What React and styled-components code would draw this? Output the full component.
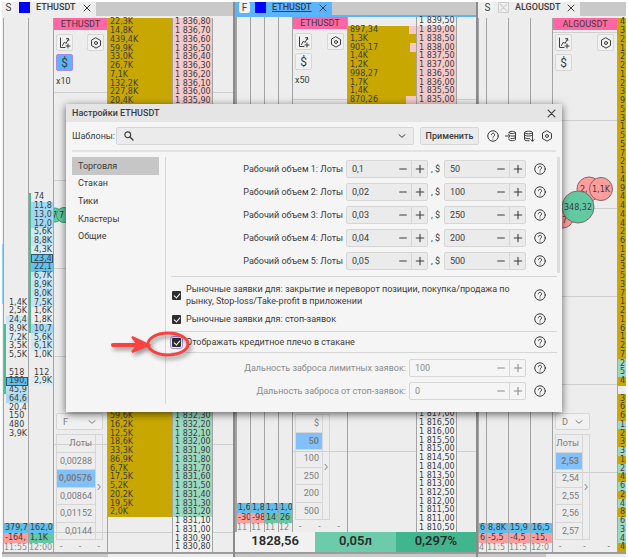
import React, { useState } from "react";
import styled, { createGlobalStyle, css } from "styled-components";

const colors = {
	page: "#ededed",
	strip: "#c9c9c9",
	line: "#a3a3a3",
	soft: "#d6d6d6",
	text: "#3c3c3c",
	muted: "#8c8c8c",
	gold: "#c8a800",
	ask: "#f5c9c9",
	bid: "#9dd9c1",
	blue: "#5cb4ff",
	cell: "#5cc0f0",
	red: "#ff9c9c",
	green: "#63c9a3",
	pink: "#ff66a3",
};

/* ---------- data ---------- */

// rows between the two visible blocks carry no quote
const price = (from, step, top, bottom) => (i) => {
	if (i > top && i < bottom) return "";
	const [whole, cents] = (from - step * i).toFixed(2).split(".");
	return `1 ${whole.slice(1)},${cents}`;
};

const place = (start, values) => Object.fromEntries(values.map((v, i) => [start + i, v]));

const spotVolumes = {
	...place(0, ["22,3K", "14,8K", "439,4K", "59,9K", "33,0K", "26,7K", "7,1K", "132,2K", "227,8K", "20,4K"]),
	...place(45, ["59,6K", "16,2K", "12,5K", "18,6K", "33,3K", "86,9K", "6,7K", "17,5K", "5,2K", "20,2K", "19,5K", "2,0K"]),
};

const futuresVolumes = place(1, ["897,34", "1,3K", "905,17", "1,4K", "1,2K", "998,27", "1,7K", "1,4K", "870,26"]);
const futuresNotches = { 1: 7, 3: 6, 9: 10 };

const algoDepth = "432122123953155721494444261535371216127254366123312462486344".split("");
// the spread is one empty row
const algoRows = [...algoDepth.slice(0, 42), "", ...algoDepth.slice(42)];
const algoBids = [39, 40, 46, 49, 51, 53, 55, 57, 58, 59];

const clusterA = {
	...place(32, ["1,4K", "2,5K", "24,4", "8,9K", "7,2K", "3,5K", "5,5K"]),
	...place(40, ["518", "190,", "45,9", "64,6", "20,4", "150", "480", "3,9K"]),
};
const clusterB = {
	...place(20, ["74", "11,8", "13,0", "12,0", "5,6K", "8,8K", "4,3K", "23,4", "22,1", "6,7K", "8,9K"]),
	...place(31, ["8,0K", "7,5K", "1,6K", "1,8K", "10,7", "5,6K", "6,1K", "1,0K"]),
	...place(40, ["112", "2,9K"]),
};
const shadesA = { 34: "#c9e6f3", 35: "#dcedf4", 36: "#dcedf4", 41: colors.cell, 42: "#b9e0f2", 43: "#a9daf2" };
const shadesB = {
	21: "#9fd8f5", 22: "#9fd8f5", 23: "#9fd8f5", 24: "#cfe9f4", 25: "#c2e4f4", 26: "#d9edf4",
	27: colors.cell, 28: "#62c3f0", 29: "#c9e6f3", 30: "#c2e4f4", 31: "#c2e4f4", 32: "#c2e4f4",
	35: "#9fd8f5", 36: "#cfe9f4", 37: "#cfe9f4", 41: "#d9edf4",
};

const lots = [
	["0,1", "50"],
	["0,02", "100"],
	["0,03", "250"],
	["0,04", "200"],
	["0,05", "500"],
];

/* ---------- icons ---------- */

const Svg = ({ size = 12, children }) => (
	<svg width={size} height={size} viewBox="0 0 24 24" fill="none" stroke="currentColor" strokeWidth="2" strokeLinecap="round" strokeLinejoin="round" aria-hidden="true">
		{children}
	</svg>
);

const HelpIcon = () => (
	<Svg>
		<circle cx="12" cy="12" r="10.5" />
		<path d="M8.8 9.5a3.2 3.2 0 1 1 4.8 2.8c-1 .6-1.6 1.1-1.6 2.2" />
		<path d="M12 18v.2" />
	</Svg>
);

const NutIcon = ({ size = 12 }) => (
	<Svg size={size}>
		<path d="M12 1.8 21 6.9v10.2l-9 5.1-9-5.1V6.9z" />
		<circle cx="12" cy="12" r="3" />
	</Svg>
);

const ImportIcon = () => (
	<Svg>
		<path d="M8 6V5c0-3 13-3 13 0v14c0 3-13 3-13 0v-1" />
		<path d="M8 5c0 3 13 3 13 0M13 12h8M12 17c4 .3 9-.2 9-2M1 12h9M7 8.500 10.500 12 7 15.500" />
	</Svg>
);

const ExportIcon = () => (
	<Svg>
		<path d="M3 5c0-3.500 16-3.500 16 0s-16 3.500-16 0v14c0 2 5 2.700 9 2.500M19 5v8M3 10c0 3 16 3 16 0M3 15c0 2 6 2.800 10 2.400" />
		<path d="M19 15v7M16 19.500l3 3 3-3" />
	</Svg>
);

const ChartIcon = () => (
	<Svg size={12}>
		<path d="M3 2v19h9M7 17l4-7 3 3 5-9M15 3.500l4-.5.500 4M18 14v8M14 18h8" />
	</Svg>
);

const CloseIcon = ({ size = 8 }) => (
	<Svg size={size}>
		<path d="M3 3l18 18M21 3 3 21" strokeWidth="3" />
	</Svg>
);

const ChevronDown = ({ size = 8 }) => (
	<Svg size={size}>
		<path d="m3 8 9 8 9-8" strokeWidth="3" />
	</Svg>
);

const ChevronRight = () => (
	<Svg size={8}>
		<path d="m9 4 7 8-7 8" strokeWidth="3" />
	</Svg>
);

const SearchIcon = () => (
	<Svg size={10}>
		<circle cx="9" cy="9" r="7" strokeWidth="2.6" />
		<path d="m14.500 14.500 7 7" strokeWidth="3.4" />
	</Svg>
);

const MinusIcon = () => (
	<Svg size={10}>
		<path d="M4 12h16" strokeWidth="2.6" />
	</Svg>
);

const PlusIcon = () => (
	<Svg size={10}>
		<path d="M3 12h18M12 3v18" strokeWidth="2.6" />
	</Svg>
);

/* ---------- workspace parts ---------- */

const Cluster = ({ values = {}, shades = {}, selected, bar, foot, tone }) => (
	<ClusterColumn>
		<ClusterRows>
			{bar && <ClusterBar $from={bar[0]} $to={bar[1]} />}
			{Object.entries(values).map(([row, value]) => (
				<ClusterCell key={row} $row={Number(row) + 1} $shade={shades[row]} $selected={Number(row) === selected}>
					{value}
				</ClusterCell>
			))}
		</ClusterRows>
		{foot && (
			<ClusterFoot>
				<FootCell $fill={colors.cell}>{foot[0]}</FootCell>
				<FootCell $fill={tone === "up" ? colors.green : colors.red}>{foot[1]}</FootCell>
				<FootTime>{foot[2]}</FootTime>
			</ClusterFoot>
		)}
	</ClusterColumn>
);

const Ticks = ({ name, dollar, leverage, offset, market, header, sizes, active, wide, children }) => (
	<TickArea $offset={offset}>
		<TickHeader>{name}</TickHeader>
		<TickTools>
			<ToolButton aria-label="График"><ChartIcon /></ToolButton>
			<ToolButton aria-label="Настройки"><NutIcon /></ToolButton>
			<ToolButton $active={dollar} aria-label="Валюта">$</ToolButton>
		</TickTools>
		{leverage && <Leverage>{leverage}</Leverage>}
		{children}
		<TickBottom>
			{market && (
				<MarketBox $wide={wide}>
					<MarketSelect aria-label="Тип" defaultValue={market}>
						<option>{market}</option>
					</MarketSelect>
					<ChevronDown />
				</MarketBox>
			)}
			<SizeBox $wide={wide}>
				<SizeList>
					<SizeHeader>{header}</SizeHeader>
					{sizes.map((size) => (
						<SizeButton key={size} $active={size === active}>{size}</SizeButton>
					))}
				</SizeList>
				<Expand aria-label="Развернуть"><ChevronRight /></Expand>
			</SizeBox>
			<Dashes><span>-</span><span>-</span><span>-</span></Dashes>
		</TickBottom>
	</TickArea>
);

const Ladder = ({ count, volumes, notches = {}, tint, goldRows, label, offset }) => {
	const rows = Array.from({ length: count }, (_, i) => i);
	return (
		<>
			<LadderColumn $offset={offset}>
				{rows.map((i) => (
					<VolumeCell key={i} $gold={goldRows(i)} $notch={notches[i]}>{volumes[i]}</VolumeCell>
				))}
			</LadderColumn>
			<LadderColumn>
				{rows.map((i) => (
					<PriceCell key={i} $tint={tint(i)}>{label(i)}</PriceCell>
				))}
			</LadderColumn>
		</>
	);
};

const PanelTab = ({ badge, name, active, first, empty }) => (
	<TabStrip $active={active}>
		<Tab $active={active} $first={first}>
			<Badge>{badge}</Badge>
			<Swatch $empty={empty}>{empty && <CloseIcon size={9} />}</Swatch>
			<TabName $active={active}>{name}</TabName>
			<TabClose aria-label="Закрыть"><CloseIcon /></TabClose>
		</Tab>
	</TabStrip>
);

/* ---------- dialog parts ---------- */

const Stepper = ({ label, value, wide, disabled }) => {
	const [current, setCurrent] = useState(value);
	return (
		<StepperBox $wide={wide} $disabled={disabled}>
			<StepperInput aria-label={label} value={current} disabled={disabled} onChange={(e) => setCurrent(e.target.value)} />
			<StepButton aria-label="Меньше" disabled={disabled}><MinusIcon /></StepButton>
			<StepButton aria-label="Больше" disabled={disabled} $divided><PlusIcon /></StepButton>
		</StepperBox>
	);
};

const Help = () => (
	<HelpButton aria-label="Справка"><HelpIcon /></HelpButton>
);

const Check = ({ id, focused, children }) => (
	<CheckRow>
		<Checkbox type="checkbox" id={id} defaultChecked $focused={focused} />
		<CheckLabel htmlFor={id}>{children}</CheckLabel>
		<Help />
	</CheckRow>
);

const SettingsDialog = () => {
	const [section, setSection] = useState("Торговля");
	return (
		<Dialog role="dialog" aria-label="Настройки ETHUSDT">
			<DialogTitle>
				<span>Настройки ETHUSDT</span>
				<IconButton aria-label="Закрыть"><CloseIcon size={9} /></IconButton>
			</DialogTitle>
			<Templates>
				<label htmlFor="template">Шаблоны:</label>
				<Combo>
					<SearchIcon />
					<ComboInput id="template" />
					<ChevronDown />
				</Combo>
				<ApplyButton>Применить</ApplyButton>
				<IconRow>
					<IconButton aria-label="Справка"><HelpIcon /></IconButton>
					<IconButton aria-label="Импорт"><ImportIcon /></IconButton>
					<IconButton aria-label="Экспорт"><ExportIcon /></IconButton>
					<IconButton aria-label="Параметры"><NutIcon /></IconButton>
				</IconRow>
			</Templates>
			<DialogBody>
				<Sections>
					{["Торговля", "Стакан", "Тики", "Кластеры", "Общие"].map((item) => (
						<SectionButton key={item} $active={item === section} onClick={() => setSection(item)}>{item}</SectionButton>
					))}
				</Sections>
				<Content>
					<LotRows>
						{lots.map(([lot, usd], i) => (
							<FormRow key={lot}>
								<span>Рабочий объем {i + 1}: Лоты</span>
								<Stepper label={`Лоты ${i + 1}`} value={lot} />
								<Unit>, $</Unit>
								<Stepper label={`$ ${i + 1}`} value={usd} />
								<Help />
							</FormRow>
						))}
					</LotRows>
					<CheckGroup>
						<Check id="market-close">
							Рыночные заявки для: закрытие и переворот позиции, покупка/продажа по<br />
							рынку, Stop-loss/Take-profit в приложении
						</Check>
						<Check id="market-stop">Рыночные заявки для: стоп-заявок</Check>
					</CheckGroup>
					<CheckGroup $single>
						<Check id="leverage" focused>Отображать кредитное плечо в стакане</Check>
					</CheckGroup>
					<LimitRows>
						<FormRow $disabled>
							<span>Дальность заброса лимитных заявок:</span>
							<Stepper label="Лимитные заявки" value="100" wide disabled />
							<Help />
						</FormRow>
						<FormRow $disabled>
							<span>Дальность заброса от стоп-заявок:</span>
							<Stepper label="Стоп-заявки" value="0" wide disabled />
							<Help />
						</FormRow>
					</LimitRows>
				</Content>
				<ScrollThumb />
			</DialogBody>
			<Marker viewBox="0 0 84 32" aria-hidden="true">
				<ellipse cx="60" cy="15" rx="20" ry="11" />
				<path d="M5 16h34" strokeWidth="4" />
				<path d="M24 8l17 8-17 7 6-7z" fill="#f9423f" strokeWidth="2" />
			</Marker>
		</Dialog>
	);
};

const App = () => (
	<>
		<GlobalStyle />
		<Workspace>
			<Panel>
				<PanelTab badge="S" name="ETHUSDT" first />
				<PanelBody $columns="1px 25px 25px 54px 65px 40px 1fr" $inset>
					<Sliver />
					<Cluster values={clusterA} shades={shadesA} selected={41} bar={[36, 44]} foot={["379,7", "-164,", "11:55"]} />
					<Cluster values={clusterB} shades={shadesB} selected={27} bar={[21, 37]} foot={["162,0", "1,1K", "12:00"]} tone="up" />
					<Ticks name="ETHUSDT" dollar wide leverage="x10" offset={74} market="F" header="Лоты" sizes={["0,00288", "0,00576", "0,00864", "0,01152", "0,0144"]} active="0,00576">
						<SideBubbles viewBox="0 0 13 18">
							<circle cx="1" cy="9" r="7" />
							<circle cx="10" cy="9" r="7.500" />
							<text x="-2" y="12">7</text>
							<text x="5" y="12">7</text>
						</SideBubbles>
					</Ticks>
					<Ladder
						count={61}
						volumes={spotVolumes}
						offset={74}
						goldRows={(i) => i < 57}
						tint={(i) => (i < 25 ? colors.ask : i < 57 ? colors.bid : null)}
						label={price(1836.8, 0.1, 9, 45)}
					/>
					<Spare $offset={74} />
				</PanelBody>
				<PanelFoot $thumb />
			</Panel>

			<Panel $divided>
				<PanelTab badge="F" name="ETHUSDT" active />
				<PanelBody $columns="1px 14px 14px 14px 14px 55px 69px 40px 1fr">
					<Cluster />
					<Cluster foot={["1,6", "-30", "11"]} />
					<Cluster foot={["1,8", "-98", "11"]} />
					<Cluster foot={["1,1", "14", "11"]} tone="up" />
					<Cluster foot={["1,0", "26", "12"]} tone="up" />
					<Ticks name="ETHUSDT" leverage="x50" offset={82} header="$" sizes={["50", "100", "250", "200", "500"]} active="50" />
					<Ladder
						count={59}
						volumes={futuresVolumes}
						notches={futuresNotches}
						offset={82}
						goldRows={(i) => i > 0 && i < 25}
						tint={(i) => (i > 0 && i < 25 ? colors.ask : null)}
						label={price(1839.5, 0.5, 9, 45)}
					/>
					<Spare $offset={82} />
				</PanelBody>
				<Totals>
					<Total>1828,56</Total>
					<Total $fill="#6ccbaa">0,05л</Total>
					<Total $fill="#41b68e">0,297%</Total>
				</Totals>
				<PanelFoot />
			</Panel>

			<Panel $divided>
				<PanelTab badge="S" name="ALGOUSDT" empty />
				<PanelBody $columns="8px 22px 22px 22px 1fr 9px" $inset>
					<Cluster foot={["6", "6", "4"]} />
					<Cluster foot={["8,8K", "-5,5", "11:5"]} />
					<Cluster foot={["15,9", "-4,5", "11:5"]} />
					<Cluster foot={["16,5", "-15,", "12:0"]} />
					<Ticks name="ALGOUSDT" offset={14} market="D" header="Лоты" sizes={["2,53", "2,54", "2,55", "2,56", "2,57"]} active="2,53">
						<Bubbles viewBox="0 0 62 56">
							<circle className="sell" cx="10" cy="42" r="10" />
							<text x="9" y="47">7</text>
							<circle className="sell" cx="36" cy="13" r="12" />
							<text x="27" y="16">2,</text>
							<circle className="buy" cx="25" cy="31" r="16" />
							<text x="11" y="34">348,32</text>
							<circle className="sell" cx="48" cy="13" r="11.500" />
							<text x="39" y="16">1,1K</text>
						</Bubbles>
					</Ticks>
					<LadderColumn>
						{algoRows.map((digit, i) => (
							<VolumeCell key={i} $gold={digit !== ""} $bid={algoBids.includes(i)}>{digit}</VolumeCell>
						))}
					</LadderColumn>
				</PanelBody>
				<PanelFoot $thumb />
			</Panel>
		</Workspace>
		<SettingsDialog />
	</>
);

/* ---------- styles ---------- */

const GlobalStyle = createGlobalStyle`
	* {
		box-sizing: border-box;
	}
	body {
		margin: 0;
		padding: 2px;
		background: #fff;
		color: ${colors.text};
		font-family: Roboto, "Noto Sans", sans-serif;
		font-size: 9px;
		line-height: 12px;
	}
	button, input, select {
		margin: 0;
		padding: 0;
		border: 0;
		background: none;
		color: inherit;
		font: inherit;
	}
	svg {
		display: block;
		flex: none;
	}
`;

const gridLines = css`
	background: linear-gradient(#cfcfcf 1px, transparent 1px) 0 ${(p) => p.$offset}px / 100% 88px;
`;

const Workspace = styled.main`
	display: grid;
	grid-template-columns: 231fr 243fr 150fr;
	height: calc(100vh - 4px);
	background: ${colors.page};
`;

const Panel = styled.section`
	display: flex;
	flex-direction: column;
	min-width: 0;
	min-height: 0;
	border-left: ${(p) => (p.$divided ? "2px solid #8b8b8b" : "0")};
`;

const TabStrip = styled.div`
	display: flex;
	flex: none;
	height: 15px;
	background: ${colors.strip};
	border-bottom: ${(p) => (p.$active ? `2px solid ${colors.blue}` : `1px solid ${colors.page}`)};
`;

const Tab = styled.div`
	display: flex;
	align-items: flex-start;
	padding: 0 5px 0 ${(p) => (p.$first ? 1 : 4)}px;
	background: ${(p) => (p.$active ? colors.blue : colors.page)};
`;

const Badge = styled.span`
	width: 11px;
	height: 11px;
	margin-right: 5px;
	border-radius: 2px;
	background: #f2f2f2;
	font-size: 10px;
	line-height: 11px;
	text-align: center;
`;

const Swatch = styled.span`
	width: 11px;
	height: 11px;
	margin-right: 6px;
	overflow: hidden;
	background: ${(p) => (p.$empty ? "#efefef" : "#0000ff")};
	border: ${(p) => (p.$empty ? "1px solid #cfcfcf" : "0")};
	color: #cfcfcf;
`;

const TabName = styled.span`
	font-weight: 500;
	line-height: 11px;
	text-decoration: ${(p) => (p.$active ? "underline" : "none")};
`;

const TabClose = styled.button`
	height: 11px;
	margin-left: 7px;
`;

const PanelBody = styled.div`
	display: grid;
	flex: 1;
	grid-template-columns: ${(p) => p.$columns};
	min-height: 0;
	padding-top: ${(p) => (p.$inset ? 1 : 0)}px;
`;

const PanelFoot = styled.div`
	flex: none;
	height: 5px;
	border-top: 2px solid #9c9c9c;
	background: linear-gradient(90deg, ${colors.strip} 46%, ${(p) => (p.$thumb ? "#ececec" : colors.strip)} 46%);
`;

const Sliver = styled.div`
	height: 60px;
	margin-top: 226px;
	background: #8fd0f2;
`;

const ClusterColumn = styled.div`
	display: grid;
	grid-template-columns: minmax(0, 1fr);
	grid-template-rows: minmax(0, 1fr);
	min-width: 0;
	overflow: hidden;
	border-left: 1px solid ${colors.line};
	font-family: "DejaVu Sans", sans-serif;
	font-size: 8px;
	white-space: nowrap;
`;

const ClusterRows = styled.div`
	display: grid;
	grid-area: 1 / 1;
	grid-template-columns: 2px minmax(0, 1fr);
	grid-template-rows: repeat(61, minmax(0, 1fr));
`;

const ClusterBar = styled.div`
	grid-column: 1;
	grid-row: ${(p) => p.$from} / ${(p) => p.$to};
	background: #4dbb93;
`;

const ClusterCell = styled.div`
	display: flex;
	grid-column: 2;
	grid-row: ${(p) => p.$row};
	align-items: center;
	padding-left: 3px;
	background: ${(p) => p.$shade || "transparent"};
	outline: ${(p) => (p.$selected ? "1px solid #35566b" : "0")};
	outline-offset: -1px;
	line-height: 8px;
`;

const ClusterFoot = styled.div`
	grid-area: 1 / 1;
	align-self: end;
	background: ${colors.page};
`;

const FootCell = styled.div`
	height: 10px;
	padding-left: 1px;
	background: ${(p) => p.$fill};
	line-height: 10px;
`;

const FootTime = styled.div`
	height: 9px;
	color: ${colors.muted};
	line-height: 9px;
`;

const TickArea = styled.div`
	position: relative;
	display: flex;
	flex-direction: column;
	min-width: 0;
	padding: 0 3px 0 2px;
	border-left: 1px solid ${colors.line};
	${gridLines}
`;

const TickHeader = styled.div`
	height: 12px;
	margin: 0 -3px 4px -2px;
	background: ${colors.pink};
	line-height: 12px;
	text-align: center;
`;

const TickTools = styled.div`
	display: grid;
	grid-template-columns: 17px 17px;
	justify-content: space-between;
	row-gap: 3px;
`;

const ToolButton = styled.button`
	display: flex;
	align-items: center;
	justify-content: center;
	height: 17px;
	border: 1px solid ${(p) => (p.$active ? "#a98be8" : colors.soft)};
	border-radius: 2px;
	background: ${(p) => (p.$active ? colors.blue : "#f1f1f1")};
	font-size: 12px;
`;

const Leverage = styled.div`
	margin-top: 4px;
`;

const TickBottom = styled.div`
	margin-top: auto;
	color: #7c7c7c;
`;

const MarketBox = styled.div`
	display: flex;
	align-items: center;
	width: ${(p) => (p.$wide ? 47 : 35)}px;
	height: 17px;
	margin-bottom: 4px;
	padding: 0 6px;
	border: 1px solid ${colors.soft};
	border-radius: 2px;
	background: #f1f1f1;
`;

const MarketSelect = styled.select`
	flex: 1;
	min-width: 0;
	appearance: none;
`;

const SizeBox = styled.div`
	display: flex;
	width: ${(p) => (p.$wide ? 47 : 35)}px;
	height: 106px;
	border: 1px solid ${colors.soft};
`;

const SizeList = styled.div`
	display: flex;
	flex: 1;
	flex-direction: column;
	border-right: 1px solid ${colors.soft};
`;

const sizeCell = css`
	display: flex;
	flex: 1;
	align-items: center;
	justify-content: flex-end;
	padding-right: 3px;
	border-bottom: 1px solid ${colors.soft};
`;

const SizeHeader = styled.div`
	${sizeCell}
`;

const SizeButton = styled.button`
	${sizeCell}
	background: ${(p) => (p.$active ? "#82c0fb" : "transparent")};
	font-weight: ${(p) => (p.$active ? 700 : 400)};

	&:last-child {
		border-bottom: 0;
	}
`;

const Expand = styled.button`
	display: flex;
	align-items: center;
	justify-content: center;
	width: 6px;
`;

const Dashes = styled.div`
	display: flex;
	justify-content: space-between;
	height: 12px;
	padding: 0 4px;
`;

const bubbleText = css`
	text {
		fill: ${colors.text};
		stroke: none;
		font-family: "DejaVu Sans", sans-serif;
		font-size: 8px;
	}
`;

const Bubbles = styled.svg`
	position: absolute;
	top: 158px;
	left: 0;
	width: 62px;
	height: 56px;
	stroke: #7d6a6a;
	stroke-width: 1;
	${bubbleText}

	.sell {
		fill: ${colors.red};
	}
	.buy {
		fill: ${colors.green};
	}
`;

const SideBubbles = styled.svg`
	position: absolute;
	top: 188px;
	left: 0;
	width: 13px;
	height: 18px;
	fill: ${colors.green};
	stroke: #3f9a7a;
	${bubbleText}
`;

const LadderColumn = styled.div`
	display: flex;
	flex-direction: column;
	min-width: 0;
	border-left: 1px solid ${colors.line};
	font-family: "DejaVu Sans", sans-serif;
	font-size: 8px;
	white-space: nowrap;
	${(p) => p.$offset && gridLines}
`;

const ladderCell = css`
	display: flex;
	flex: 1;
	align-items: center;
	min-height: 0;
	padding-left: 2px;
	line-height: 8px;
`;

const VolumeCell = styled.div`
	${ladderCell}
	background: ${(p) => (p.$bid ? colors.bid : p.$gold ? colors.gold : "transparent")};
	border-right: ${(p) => (p.$notch ? `${p.$notch}px solid ${colors.ask}` : "0")};
`;

const PriceCell = styled.div`
	${ladderCell}
	background: ${(p) => p.$tint || "#f1f1f1"};
`;

const Spare = styled.div`
	border-left: 1px solid ${colors.line};
	${gridLines}
`;

const Totals = styled.div`
	display: grid;
	flex: none;
	grid-template-columns: repeat(3, 1fr);
	height: 20px;
	font-size: 13px;
	font-weight: 600;
`;

const Total = styled.div`
	background: ${(p) => p.$fill || "#f1f1f1"};
	color: #2b2b2b;
	line-height: 18px;
	text-align: center;
`;

const Dialog = styled.form.attrs({ onSubmit: (e) => e.preventDefault() })`
	position: absolute;
	top: 104px;
	right: 66px;
	left: 66px;
	padding-bottom: 8px;
	background: #f5f5f5;
	box-shadow: 0 2px 8px rgba(0, 0, 0, 0.6);
`;

const DialogTitle = styled.div`
	display: flex;
	align-items: center;
	justify-content: space-between;
	height: 18px;
	padding: 0 6px;
	background: #e5e5e5;
	font-weight: 500;
`;

const IconButton = styled.button`
	display: flex;
`;

const Templates = styled.div`
	display: flex;
	align-items: center;
	gap: 6px;
	margin: 0 6px;
	padding: 5px 0;
	border-bottom: 2px solid #e2e2e2;

	label {
		width: 38px;
		white-space: nowrap;
	}
`;

const Combo = styled.div`
	display: flex;
	flex: 1;
	align-items: center;
	height: 18px;
	padding: 0 7px;
	border: 1px solid ${colors.soft};
	border-radius: 2px;
	background: #ebebeb;
`;

const ComboInput = styled.input`
	flex: 1;
	min-width: 0;
`;

const ApplyButton = styled.button`
	width: 59px;
	height: 18px;
	border: 1px solid ${colors.soft};
	border-radius: 2px;
	background: #ebebeb;
	font-weight: 500;
`;

const IconRow = styled.div`
	display: flex;
	gap: 6px;
	padding: 0 3px 0 2px;
`;

const DialogBody = styled.div`
	display: flex;
	padding: 5px 2px 0 6px;
`;

const Sections = styled.nav`
	display: flex;
	flex: none;
	flex-direction: column;
	width: 87px;
	height: 88px;
`;

const SectionButton = styled.button`
	flex: 1;
	padding: 0 6px;
	background: ${(p) => (p.$active ? "#c6c6c6" : "transparent")};
	text-align: left;
`;

const Content = styled.div`
	flex: 1;
	min-width: 0;
	margin-left: 6px;
	padding-left: 5px;
	border-left: 1px solid ${colors.soft};
`;

const LotRows = styled.div`
	display: flex;
	flex-direction: column;
	justify-content: space-between;
	height: 120px;
	padding: 3px 0 6px;
	border-bottom: 1px solid ${colors.soft};
`;

const FormRow = styled.div`
	display: flex;
	align-items: center;
	justify-content: flex-end;
	gap: 3px;
	color: ${(p) => (p.$disabled ? colors.muted : colors.text)};
	white-space: nowrap;
`;

const Unit = styled.span`
	width: 10px;
`;

const StepperBox = styled.div`
	display: flex;
	align-items: center;
	width: ${(p) => (p.$wide ? 117 : 82)}px;
	height: 18px;
	border: 1px solid ${colors.soft};
	border-radius: 2px;
	background: ${(p) => (p.$disabled ? "#f5f5f5" : "#ebebeb")};
`;

const StepperInput = styled.input`
	flex: 1;
	min-width: 0;
	padding-left: 5px;
`;

const StepButton = styled.button`
	display: flex;
	align-items: center;
	justify-content: center;
	width: 16px;
	height: 16px;
	border-left: ${(p) => (p.$divided ? `1px solid ${colors.soft}` : "0")};
`;

const HelpButton = styled.button`
	display: flex;
	margin: 0 11px 0 auto;
	color: ${colors.text};

	${FormRow} & {
		margin-left: 5px;
	}
`;

const CheckGroup = styled.div`
	display: flex;
	flex-direction: column;
	gap: 6px;
	padding: ${(p) => (p.$single ? 4 : 6)}px 0;
	border-bottom: 1px solid ${colors.soft};
`;

const CheckRow = styled.div`
	display: flex;
	align-items: center;
	gap: 5px;
`;

const Checkbox = styled.input`
	display: flex;
	flex: none;
	justify-content: center;
	width: 9px;
	height: 9px;
	margin-left: 1px;
	appearance: none;
	border-radius: 1px;
	background: #2f2f2f;
	outline: ${(p) => (p.$focused ? "1px solid #a98be8" : "0")};
	outline-offset: 1px;

	&:checked::after {
		content: "";
		width: 3px;
		height: 5px;
		margin-top: 1px;
		border: solid #fff;
		border-width: 0 1px 1px 0;
		transform: rotate(40deg);
	}
`;

const CheckLabel = styled.label`
	white-space: nowrap;
`;

const LimitRows = styled.div`
	display: flex;
	flex-direction: column;
	gap: 5px;
	padding: 6px 0 4px;
`;

const ScrollThumb = styled.div`
	flex: none;
	width: 3px;
	height: 116px;
	background: #dedede;
`;

const Marker = styled.svg`
	position: absolute;
	top: 225px;
	left: 42px;
	width: 84px;
	height: 32px;
	fill: none;
	stroke: #f9423f;
	stroke-width: 3;
	stroke-linecap: round;
	filter: drop-shadow(2px 3px 2px rgba(0, 0, 0, 0.4));
	pointer-events: none;
`;

export default App;
